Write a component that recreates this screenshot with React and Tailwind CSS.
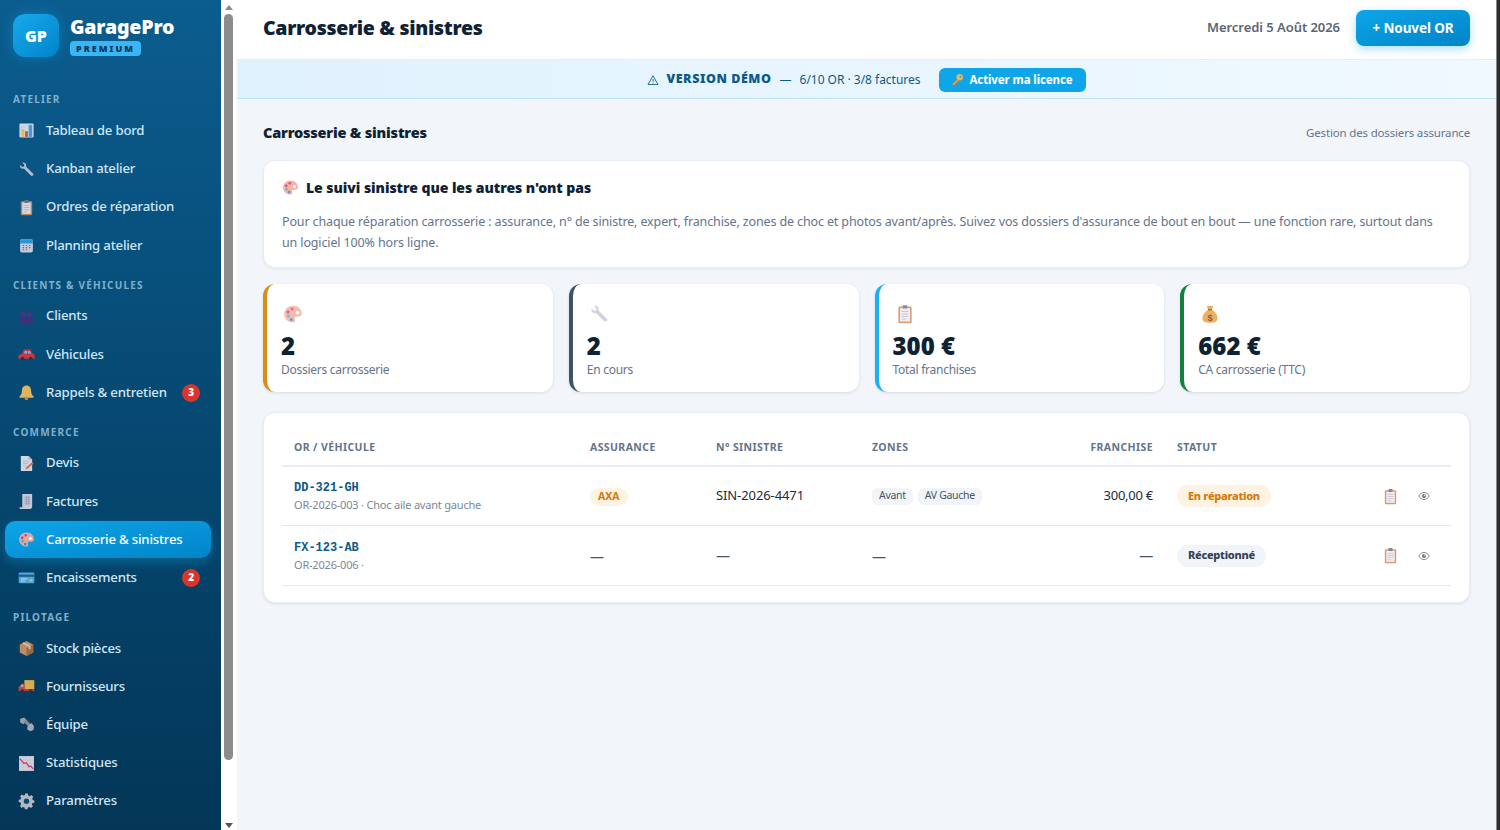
import React from "react";

const S = ({ children, className = "", vb = "0 0 24 24" }) => (
  <svg viewBox={vb} className={className} aria-hidden="true">{children}</svg>
);

const IChart = (p) => (<S {...p}>
  <rect x="2" y="2" width="20" height="20" rx="1.500" fill="#e8e6ee" />
  <rect x="5" y="10" width="4" height="11" fill="#f2c94c" /><rect x="10" y="13" width="4" height="8" fill="#e0505a" />
  <rect x="15" y="4" width="5" height="17" fill="#4aa3e0" /><path d="M3 7h8M3 10h2M3 14h2" stroke="#c9c6d6" strokeWidth="1" />
</S>);
const IWrench = ({ color = "#c9c6d6", ...p }) => (<S {...p}>
  <path d="M3 5.500 6 8.400l2.400-.6.6-2.400L6 2.500c2.600-.9 5.400.7 5.600 3.400 0 .7-.1 1.300-.3 1.800l9.800 9.800c.9.9.9 2.200 0 3s-2.100.9-3 0L8.300 10.700c-2.900 1-6-.9-5.300-5.200Z" fill={color} />
</S>);
const IClip = (p) => (<S {...p}>
  <rect x="4" y="3" width="16" height="20" rx="1.500" fill="#d38a54" /><rect x="6" y="5" width="12" height="16" fill="#ece9f2" />
  <rect x="9" y="1.500" width="6" height="4" rx="1" fill="#77727f" /><path d="M8 9h8M8 12h8M8 15h8M8 18h5" stroke="#b5b1c4" strokeWidth="1" />
</S>);
const ICal = (p) => (<S {...p}>
  <rect x="3" y="3" width="18" height="19" rx="2.500" fill="#dcd8e6" /><path d="M3 9V5.500A2.500 2.500 0 0 1 5.500 3h13A2.500 2.500 0 0 1 21 5.500V9Z" fill="#2f9fe0" />
  <path d="M6.500 12h2M11 12h2M15.500 12h2M6.500 15h2M11 15h2M15.500 15h2M6.500 18h2M11 18h2" stroke="#76708a" strokeWidth="1.600" />
</S>);
const IPeople = (p) => (<S {...p}>
  <circle cx="7.500" cy="9" r="4.200" fill="#4f2f86" /><circle cx="16.500" cy="9" r="4.200" fill="#4f2f86" />
  <path d="M1.500 21.500c0-5 2.500-8 6-8s6 3 6 8ZM11 21.500c0-5 2-8 5.500-8s6 3 6 8Z" fill="#472c7a" />
</S>);
const ICar = (p) => (<S {...p}>
  <path d="M6 10.500 8 5h9.500l3 5.500 3 2v5.500H.5v-5Z" fill="#dd3545" /><path d="M8.500 10.500 9.700 7h3v3.500ZM14 7h2.700l2 3.500H14Z" fill="#7fc0ea" />
  <circle cx="6.500" cy="18" r="2.700" fill="#2e3440" /><circle cx="18" cy="18" r="2.700" fill="#2e3440" />
</S>);
const IBell = (p) => (<S {...p}>
  <path d="M12 2c4 0 6.500 3 6.500 7 0 5 1.500 6.500 3.500 8.500V19.500H2V17.500c2-2 3.500-3.500 3.500-8.500 0-4 2.500-7 6.500-7Z" fill="#f6c060" />
  <circle cx="12" cy="20.500" r="2.500" fill="#d98f32" />
</S>);
const IMemo = (p) => (<S {...p}>
  <path d="M4 1.500h11l5 5V22.500H4Z" fill="#e9e6ef" /><path d="M15 1.500v5h5Z" fill="#bcb7ca" /><path d="M7 9h8M7 12h7M7 15h4" stroke="#bcb7ca" strokeWidth="1" />
  <path d="m10.500 20.500 1-3 8.500-7.500 2 2-8.500 7.500Z" fill="#e8743b" />
</S>);
const IReceipt = (p) => (<S {...p}>
  <path d="M6 1.500h14v17.500c0 2-1 3.500-3 3.500H4c-1.500 0-2-1-2-2.500h4Z" fill="#d9d6e0" /><path d="M9 6h8M9 9h8M9 12h8M9 15h8M12 4v13M15 4v13" stroke="#9e99ad" strokeWidth=".9" />
</S>);
const IPalette = (p) => (<S {...p}>
  <path d="M12 2C6 2 1.500 6.500 1.500 12S6 22 12 22c2 0 2.500-1 2.500-2.200 0-1.500-1-2-.5-3.300.4-1 1.400-1.500 3-1.500h2c2 0 3.500-1 3.500-3.500C22.500 6 18 2 12 2Z" fill="#f8a99b" />
  <circle cx="17.500" cy="10.500" r="2.200" fill="#fff" /><circle cx="11" cy="6" r="1.800" fill="#d9447e" /><circle cx="6" cy="9.500" r="1.800" fill="#c23a8c" />
  <circle cx="6.500" cy="14.500" r="1.800" fill="#49b7c9" /><circle cx="10" cy="18.500" r="1.800" fill="#2f8fd8" />
</S>);
const ICard = (p) => (<S {...p}>
  <rect x="1" y="5" width="22" height="15" rx="1.500" fill="#58b4e8" /><rect x="1" y="8" width="22" height="3" fill="#1f5e8c" />
  <path d="M4 14h9M4 17h6" stroke="#e4f2fb" strokeWidth="1.200" /><rect x="16" y="14.500" width="4" height="3" fill="#f2c94c" />
</S>);
const IBox = (p) => (<S {...p}>
  <path d="M12 1.500 21.500 6.500v11L12 22.500 2.500 17.500v-11Z" fill="#d09565" /><path d="M12 11.500 21.500 6.500v11L12 22.500Z" fill="#a96f43" /><path d="m7 4 9.500 5v4" stroke="#eed7b8" strokeWidth="2.200" fill="none" />
</S>);
const ITruck = (p) => (<S {...p}>
  <rect x="9" y="3" width="14" height="13" fill="#f0b94a" /><path d="M9 8H5l-4 5v5.500H9Z" fill="#e8433f" /><rect x="1" y="15.500" width="22" height="3" fill="#d43a3a" />
  <path d="M5.500 9.500h2v3H3.500Z" fill="#9ed0ef" /><circle cx="6" cy="18.500" r="2.500" fill="#2e3440" /><circle cx="18" cy="18.500" r="2.500" fill="#2e3440" />
</S>);
const IBolt = (p) => (<S {...p}>
  <path d="m3 4 6-2 3.500 4.500-4.500 5L3 9Z" fill="#aaa7b2" /><path d="m8 8.500 3.500-3.500 10 10-3.500 3.500Z" fill="#94919d" /><path d="m13.500 14.500 5.500-4.500 3.500 4-.5 5.500-4.500 2-4.500-2.500Z" fill="#b7b4bf" />
</S>);
const IDown = (p) => (<S {...p}>
  <rect x="1.500" y="1.500" width="21" height="21" fill="#e4e1ea" /><path d="M2 7h20M2 12h20M2 17h20M7 2v20M12 2v20M17 2v20" stroke="#cfcbd8" strokeWidth=".7" />
  <path d="m2.500 5 6 7 3-1.500 4 6 2.500-1 3.500 4.500" stroke="#e0396a" strokeWidth="1.700" fill="none" />
</S>);
const IGear = (p) => (<S {...p}>
  <path d="M10 2h4l.6 3 2.400 1 2.600-1.700 2.800 2.800L20.700 9.700l1 2.300 2.300.5v3.500l-2.800.5-1 2.400 1.600 2.500-2.800 2.800-2.500-1.700-2.400 1-.6 2.700h-4l-.6-2.800-2.400-1-2.500 1.700L2.100 20.600 3.700 18l-1-2.400L0 15v-3.500l2.700-.6 1-2.300L2.100 6.100l2.800-2.800L7.400 5 9.600 4Z" transform="translate(1 -1) scale(.92)" fill="#c7c4cf" />
  <circle cx="12" cy="11.500" r="3.800" fill="#0a4a72" />
</S>);
const IKey = (p) => (<S {...p}>
  <circle cx="16" cy="8" r="6" fill="#f2b54a" /><circle cx="17.500" cy="6.500" r="1.600" fill="#0ea0e4" /><path d="M12 11 3 20v2h4l1-1v-2h2l1-1v-2h2l1.500-2Z" fill="#e59a3a" />
</S>);
const IBag = (p) => (<S {...p}>
  <path d="M8 2.500h8l-2 4.500h-4Z" fill="#e6983a" /><path d="M10 7h4c4 2 7 6.500 7 10 0 4-3 5.500-9 5.500S3 21 3 17c0-3.500 3-8 7-10Z" fill="#ef9b35" />
  <rect x="9.500" y="6" width="5" height="1.800" fill="#8a5a26" /><text x="12" y="20" textAnchor="middle" fontSize="11" fontWeight="700" fill="#5e3d1a" fontFamily="Liberation Sans, sans-serif">$</text>
</S>);
const IEye = (p) => (<S {...p}>
  <path d="M1.500 12C5 6.500 8.500 5 12 5s7 1.500 10.500 7C19 17.500 15.500 19 12 19S5 17.500 1.500 12Z" fill="none" stroke="#70757f" strokeWidth="1.800" />
  <circle cx="12" cy="12" r="4" fill="#70757f" /><circle cx="13.500" cy="10.500" r="1.300" fill="#fff" />
</S>);
const IWarn = (p) => (<S {...p}>
  <path d="M12 3.500 22 21H2Z" fill="none" stroke="#0c5a86" strokeWidth="1.700" strokeLinejoin="round" /><path d="M12 9.500v6M12 17v2" stroke="#0c5a86" strokeWidth="1.600" />
</S>);

const sections = [
  { title: "ATELIER", items: [
    { label: "Tableau de bord", Icon: IChart },
    { label: "Kanban atelier", Icon: IWrench },
    { label: "Ordres de réparation", Icon: IClip },
    { label: "Planning atelier", Icon: ICal },
  ]},
  { title: "CLIENTS & VÉHICULES", items: [
    { label: "Clients", Icon: IPeople },
    { label: "Véhicules", Icon: ICar },
    { label: "Rappels & entretien", Icon: IBell, badge: 3 },
  ]},
  { title: "COMMERCE", items: [
    { label: "Devis", Icon: IMemo },
    { label: "Factures", Icon: IReceipt },
    { label: "Carrosserie & sinistres", Icon: IPalette, active: true },
    { label: "Encaissements", Icon: ICard, badge: 2 },
  ]},
  { title: "PILOTAGE", items: [
    { label: "Stock pièces", Icon: IBox },
    { label: "Fournisseurs", Icon: ITruck },
    { label: "Équipe", Icon: IBolt },
    { label: "Statistiques", Icon: IDown },
    { label: "Paramètres", Icon: IGear },
  ]},
];

function NavItem({ label, Icon, badge, active }) {
  return (
    <div className={`mb-[1px] ml-[5px] mr-[10px] flex h-[37.200px] items-center gap-[11px] rounded-[10px] pl-[13px] pr-[11px] text-[13.200px] font-medium tracking-[-0.200px] ${active ? "bg-gradient-to-br from-[#0ea5e9] to-[#0284c7] text-white shadow-[0_4px_12px_rgba(14,165,233,0.35)]" : "text-[#cfe6f5]"}`}>
      <Icon className="h-[17px] w-[17px] shrink-0 opacity-90" />
      <span className="flex-1 whitespace-nowrap">{label}</span>
      {badge ? <span className="flex h-[18px] w-[18px] items-center justify-center rounded-full bg-[#d9352c] text-[10px] font-black text-white">{badge}</span> : null}
    </div>
  );
}

function Sidebar() {
  return (
    <aside className="flex h-[830px] w-[221px] shrink-0 flex-col bg-gradient-to-b from-[#0b5d8f] to-[#033657]">
      <div className="flex h-[71px] items-start gap-[11px] pl-[13px] pt-[14px]">
        <div className="flex h-[43px] w-[46px] items-center justify-center rounded-xl bg-gradient-to-br from-[#17a9ee] to-[#0284c7] text-[16px] font-black text-white shadow-[0_0_14px_rgba(14,165,233,0.4)]">GP</div>
        <div className="flex flex-col items-start">
          <div className="text-[19.600px] font-black leading-[26px] tracking-[-0.200px] text-white">GaragePro</div>
          <div className="mt-[1px] flex h-[15px] w-[71px] items-center justify-center rounded-[4px] bg-[#38b6f5] text-[9px] font-black tracking-[2px] text-[#0a3555]">PREMIUM</div>
        </div>
      </div>
      <div className="flex flex-col pt-[20.400px]">
        {sections.map((s, i) => (
          <div key={s.title} className={i ? "mt-[11.500px]" : ""}>
            <div className="mb-[3px] flex h-[18px] items-center pb-[1px] pl-[13px] text-[10px] font-bold tracking-[1.200px] text-[#7fb0cc]">{s.title}</div>
            {s.items.map((it) => <NavItem key={it.label} {...it} />)}
          </div>
        ))}
      </div>
    </aside>
  );
}

function ScrollBar() {
  return (
    <div className="flex h-[830px] w-4 shrink-0 flex-col items-start bg-white pl-[3px]">
      <div className="flex h-[14px] w-[9px] items-center justify-center">
        <div className="h-0 w-0 border-x-[4px] border-b-[5px] border-x-transparent border-b-[#8a8a8a]" />
      </div>
      <div className="h-[746px] w-[9px] rounded-[5px] bg-[#8c8c8c]" />
      <div className="flex w-[9px] flex-1 items-end justify-center pb-[2px]">
        <div className="h-0 w-0 border-x-[4px] border-t-[5px] border-x-transparent border-t-[#555]" />
      </div>
    </div>
  );
}

function Stat({ Icon, value, label, border }) {
  return (
    <div className={`h-[108px] flex-1 rounded-xl border-l-[4px] bg-white pl-[14px] pt-[20px] shadow-[0_1px_3px_rgba(15,23,42,0.12)] ${border}`}>
      <Icon className="ml-[2px] h-[20px] w-[20px] opacity-80" />
      <div className="mt-[7px] text-[24px] font-black leading-[30px] text-[#0f2233]">{value}</div>
      <div className="text-[12px] leading-[17px] tracking-[-0.270px] text-[#64748b]">{label}</div>
    </div>
  );
}

const Dash = () => <span className="text-[14px] text-[#475569]">—</span>;
const th = "px-3 pb-[9px] text-[10.500px] font-bold tracking-[0.400px] text-[#64748b]";
const td = "px-3 align-middle";

function Row({ plate, sub, ass, sin, zones, fr, status, statusClass }) {
  return (
    <tr className="h-[60px] border-b border-[#e2e8f0]">
      <td className={td}>
        <div className="font-['Liberation_Mono','DejaVu_Sans_Mono',monospace] text-[12px] font-bold leading-[18px] text-[#0c5a86]">{plate}</div>
        <div className="text-[11px] leading-[16px] tracking-[-0.200px] text-[#7a8799]">{sub}</div>
      </td>
      <td className={td}>{ass ? <span className="mb-[2px] inline-flex h-[18px] items-center rounded-full bg-[#fef3e2] px-[8px] align-middle text-[10.500px] font-bold text-[#d97706]">{ass}</span> : <Dash />}</td>
      <td className={`${td} text-[13px] tracking-[-0.100px] text-[#1e293b]`}>{sin || <Dash />}</td>
      <td className={td}>
        {zones ? <div className="flex gap-[5px]">{zones.map((z) => <span key={z} className="inline-flex h-[17px] items-center rounded-[6px] bg-[#f1f5f9] px-[7px] text-[10.500px] tracking-[-0.300px] text-[#475569]">{z}</span>)}</div> : <Dash />}
      </td>
      <td className={`${td} text-right text-[13px] tracking-[-0.250px] text-[#1e293b]`}>{fr || <Dash />}</td>
      <td className={td}><span className={`mb-[2px] inline-flex h-[22px] items-center rounded-full px-[11px] align-middle text-[11px] font-extrabold tracking-[-0.280px] ${statusClass}`}>{status}</span></td>
      <td className="pr-[21px]">
        <div className="flex items-center justify-end gap-[19px]">
          <IClip className="h-[17px] w-[17px] opacity-85" />
          <IEye className="h-[12px] w-[12px]" />
        </div>
      </td>
    </tr>
  );
}

export default function App() {
  return (
    <div className="flex h-[830px] w-[1500px] overflow-hidden bg-[#f2f6fb] font-['Noto_Sans','Open_Sans',sans-serif]">
      <Sidebar />
      <ScrollBar />
      <main className="flex h-[830px] min-w-0 flex-1 flex-col">
        <header className="flex h-[60px] shrink-0 items-center justify-between border-b border-[#e5eef5] bg-white pb-[3px] pl-[26px] pr-[26px]">
          <h1 className="text-[19.500px] font-black tracking-[-0.300px] text-[#0f2233]">Carrosserie &amp; sinistres</h1>
          <div className="flex items-center gap-4">
            <span className="text-[13px] font-semibold tracking-[-0.050px] text-[#5b6675]">Mercredi 5 Août 2026</span>
            <button className="flex h-[36px] w-[114px] items-center justify-center rounded-lg bg-gradient-to-br from-[#0ea5e9] to-[#0284c7] text-[13.500px] font-bold tracking-[-0.100px] text-white shadow-[0_3px_10px_rgba(14,165,233,0.35)]">+ Nouvel OR</button>
          </div>
        </header>
        <div className="flex h-[39px] shrink-0 items-center justify-center border-b border-[#bae6fd] bg-gradient-to-r from-[#e0f2fe] to-[#f0f9ff] pt-[1px]">
          <IWarn className="mr-[7px] h-[12px] w-[12px]" />
          <span className="text-[12.500px] font-black tracking-[0.550px] text-[#0c5a86]">VERSION DÉMO</span>
          <span className="mx-[8px] text-[12px] text-[#0c5a86]">—</span>
          <span className="text-[12px] tracking-[-0.020px] text-[#0c5a86]">6/10 OR · 3/8 factures</span>
          <span className="ml-[18px] flex h-[24px] w-[147px] items-center justify-center gap-[5px] rounded-md bg-[#0ea5e9] text-[11.500px] font-bold tracking-[-0.100px] text-white">
            <IKey className="h-[13px] w-[13px]" /> Activer ma licence
          </span>
        </div>
        <section className="flex flex-col pl-[26px] pr-[26px] pt-[22px]">
          <div className="flex h-[24px] items-center justify-between">
            <h2 className="text-[14.500px] font-black tracking-[-0.200px] text-[#0f2233]">Carrosserie &amp; sinistres</h2>
            <span className="text-[11.500px] tracking-[-0.170px] text-[#64748b]">Gestion des dossiers assurance</span>
          </div>
          <div className="mt-[15px] h-[108px] rounded-xl border border-[#e8eef5] bg-white pl-[18px] pr-[30px] pt-[16px] shadow-[0_1px_3px_rgba(15,23,42,0.08)]">
            <div className="flex items-center gap-[7px]">
              <IPalette className="h-[17px] w-[17px] opacity-90" />
              <span className="text-[14px] font-black tracking-[-0.050px] text-[#0f2233]">Le suivi sinistre que les autres n'ont pas</span>
            </div>
            <p className="mt-[14px] text-[12.500px] leading-[20.500px] tracking-[-0.135px] text-[#64748b]">Pour chaque réparation carrosserie : assurance, n° de sinistre, expert, franchise, zones de choc et photos avant/après. Suivez vos dossiers d'assurance de bout en bout — une fonction rare, surtout dans un logiciel 100% hors ligne.</p>
          </div>
          <div className="mt-[16px] flex gap-4">
            <Stat Icon={IPalette} value="2" label="Dossiers carrosserie" border="border-[#d98e14]" />
            <Stat Icon={IWrench} value="2" label="En cours" border="border-[#3f5267]" />
            <Stat Icon={IClip} value="300 €" label="Total franchises" border="border-[#1ab0f2]" />
            <Stat Icon={IBag} value="662 €" label="CA carrosserie (TTC)" border="border-[#15803d]" />
          </div>
          <div className="mt-[20px] h-[191px] rounded-xl border border-[#e8eef5] bg-white px-[18px] pt-[27px] shadow-[0_1px_3px_rgba(15,23,42,0.1)]">
            <table className="w-full table-fixed border-collapse text-left">
              <colgroup>
                <col className="w-[296px]" /><col className="w-[126px]" /><col className="w-[156px]" /><col className="w-[149px]" /><col className="w-[156px]" /><col className="w-[200px]" /><col />
              </colgroup>
              <thead>
                <tr className="border-b-2 border-[#e6edf4]">
                  <th className={th}>OR / VÉHICULE</th>
                  <th className={th}>ASSURANCE</th>
                  <th className={th}>N° SINISTRE</th>
                  <th className={th}>ZONES</th>
                  <th className={`${th} text-right`}>FRANCHISE</th>
                  <th className={th}>STATUT</th>
                  <th className={th}></th>
                </tr>
              </thead>
              <tbody>
                <Row plate="DD-321-GH" sub="OR-2026-003 · Choc aile avant gauche" ass="AXA" sin="SIN-2026-4471" zones={["Avant", "AV Gauche"]} fr="300,00 €" status="En réparation" statusClass="bg-[#fef3e2] text-[#d97706]" />
                <Row plate="FX-123-AB" sub="OR-2026-006 ·" status="Réceptionné" statusClass="bg-[#f1f5f9] text-[#334155]" />
              </tbody>
            </table>
          </div>
        </section>
      </main>
      <div className="h-[830px] w-[4px] shrink-0 border-l border-[#8a8a8a] bg-[#2e2e2e]" />
    </div>
  );
}
